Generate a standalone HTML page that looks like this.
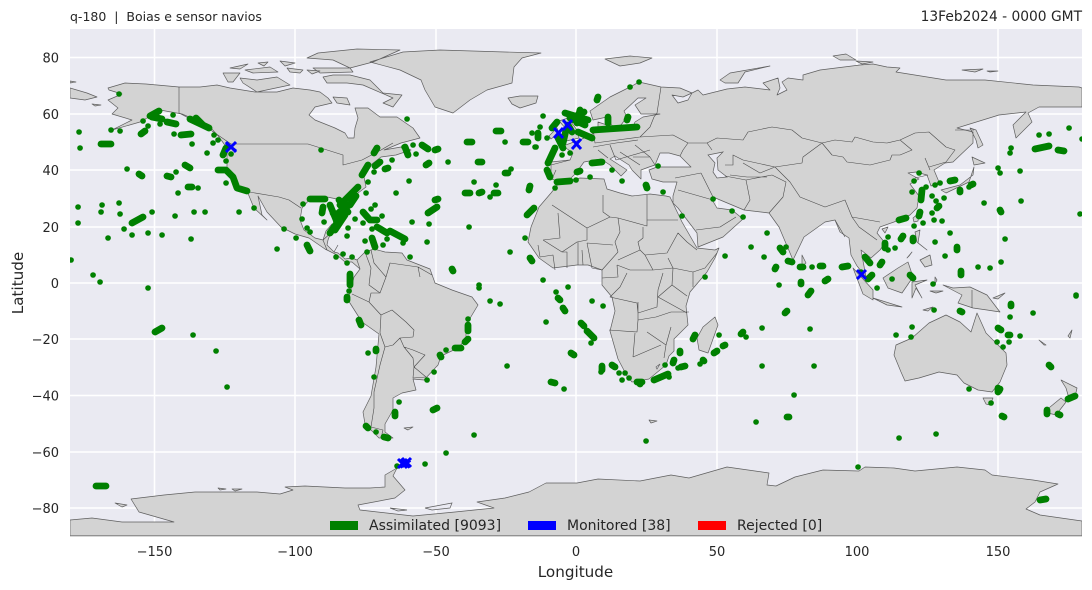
<!DOCTYPE html>
<html><head><meta charset="utf-8"><style>
html,body{margin:0;padding:0;background:#fff}
svg{display:block}
text{font-family:"DejaVu Sans","Liberation Sans",sans-serif;fill:#262626}
</style></head><body>
<svg width="1092" height="590" viewBox="0 0 1092 590" xmlns="http://www.w3.org/2000/svg">
<defs><clipPath id="c"><rect x="70" y="29" width="1012" height="507"/></clipPath></defs>
<rect x="70" y="29" width="1012" height="507" fill="#eaeaf2"/>
<path d="M154.500 29V536M295 29V536M436 29V536M576 29V536M717 29V536M857 29V536M998 29V536M70 57.500H1082M70 114H1082M70 170H1082M70 227H1082M70 283H1082M70 339H1082M70 395.500H1082M70 452H1082M70 508H1082" stroke="#fff" stroke-width="1.500" fill="none"/>
<g clip-path="url(#c)">
<path fill="#d3d3d3" stroke="#5e5e5e" stroke-width=".7" stroke-linejoin="round" d="
M108 88L125 83 146 84 179 87 200 87 217 85 230 88 255 92 277 92 293 88 310 90 320 92 328 98 332 103 315 107 309 115 315 120 335 128 345 133 348 138 354 138 355 128 358 118 355 108 368 108 380 117 397 117 413 128 420 138 401 143 384 150 401 147 411 150 396 155 381 157 368 167 364 177 366 187 354 196 350 206 349 213 345 205 342 200 327 197 310 199 302 208 300 220 304 230 315 238 323 240 326 231 332 224 331 232 328 240 327 245 334 252 338 253 345 259 352 258 357 260 360 269 352 262 345 262 337 255 325 249 309 238 295 234 281 227 267 212 258 196 262 215 267 220 254 208 247 191 239 187 227 170 227 148 219 137 211 128 196 120 182 114 160 110 154 114 140 122 112 130 132 120 112 114 118 108 108 100 122 94 109 90Z
M365 252L374 249 385 252 402 253 407 260 430 269 435 283 452 290 472 297 478 305 466 325 466 339 458 348 441 356 438 365 424 380 413 379 416 390 402 393 393 398 393 410 385 424 385 432 393 438 379 438 365 424 363 412 371 396 376 367 379 334 362 322 348 300 351 289 354 277 360 269 357 260Z
M559 183L580 178 604 179 607 189 620 193 632 196 650 194 666 196 670 197 682 222 697 248 715 250 719 248 715 258 707 272 690 292 686 306 688 325 674 339 674 351 669 356 666 365 649 379 632 382 627 376 618 359 610 331 615 311 612 297 602 285 602 270 588 265 577 265 553 268 539 258 528 242 531 227 539 207 551 193Z
M551 179L551 162 570 160 573 153 563 146 582 139 598 131 598 122 607 125 604 131 615 131 632 129 635 122 643 117 660 114 641 114 635 105 646 98 638 98 624 111 627 117 621 125 613 127 607 117 593 120 590 111 610 97 632 86 639 82 661 87 680 88 692 93 683 97 672 95 678 103 688 100 692 93 698 90 703 95 727 89 745 87 770 90 763 83 778 78 780 88 777 95 787 90 782 82 788 78 803 80 803 75 820 70 860 65 873 64 887 67 900 68 896 72 946 80 985 80 1033 85 1079 87 1082 88V107H1039L1028 113 1032 122 1016 138 1013 125 1026 112 999 115 957 128 973 132 973 143 953 162 945 163 934 170 939 182 931 186 927 175 916 172 908 173 919 179 910 184 919 196 917 208 910 215 894 222 880 227 877 233 885 243 880 250 871 258 861 250 866 277 857 266 851 255 849 238 840 232 835 220 825 222 804 237 793 260 779 227 769 213 744 210 713 197 711 198 717 208 732 210 743 219 723 237 698 247 697 233 678 208 673 203 673 196 677 182 663 182 652 179 649 170 657 167 674 167 691 167 680 156 669 153 660 153 655 165 649 167 641 170 641 179 632 170 629 165 615 156 610 159 627 170 621 176 610 165 601 159 584 162 576 173 570 179 562 182Z
M403 52L440 50 505 52 541 53 522 58 514 67 512 83 487 90 470 100 453 113 435 107 425 90 421 80 400 70 370 62Z
M508 98L520 96 538 96 536 103 520 108 512 104Z
M562 142L579 138 577 130 568 118 559 121 568 131 562 136Z
M549 136L557 128 559 133 551 139Z
M323 77L333 75 350 75 370 80 383 93 402 95 393 107 383 103 393 98 363 85 347 83 327 83Z
M333 97L347 98 350 105 337 103Z
M240 78L257 80 277 77 290 85 257 92 243 83Z
M223 73L240 73 233 82 228 82Z
M230 68L248 64 240 69Z M245 70L270 67 278 72 253 73Z M287 68L303 70 300 73 290 72Z M307 70L320 71 312 74Z
M318 53L357 49 400 50 373 62 350 68 333 60 307 58Z
M313 68L350 68 353 72 320 73Z
M258 63L268 62 264 66Z M280 61L295 63 285 66Z
M605 59L630 56 652 58 640 63 620 66Z
M720 80L730 73 770 66 745 72 738 83 725 83Z
M833 56L846 54 856 60 840 60Z M856 61L873 62 862 64Z M962 70L983 69 975 72Z M987 71L998 71 990 72Z
M970 128L976 130 983 145 978 148 976 140Z
M941 190L960 185 973 175 974 167 969 182 946 193Z M972 157L985 163 974 165Z
M853 268L873 290 873 300 863 294Z
M873 298L902 307 887 305Z
M883 278L898 268 908 262 913 277 902 293 888 288Z
M912 282L927 280 915 285 922 298 916 288 912 298Z
M943 285L953 288 970 287 987 295 1000 312 987 310 973 308 958 303 962 295Z
M915 232L920 230 918 243 927 250 917 242Z M920 260L930 255 932 265 925 267Z
M907 258L912 252 909 256Z M923 310L933 307 928 311Z M935 277L937 280 935 284Z M930 291L943 291 936 293Z M993 298L1005 293 998 299Z
M913 218L919 213 918 221 914 222Z M882 229L888 227 885 233Z
M802 255L806 263 802 266Z
M715 317L718 325 708 353 699 350 697 338 703 327Z
M896 345L912 338 929 323 946 315 960 322 971 332 977 313 986 333 1006 353 1007 365 1000 382 992 392 978 390 964 383 957 375 939 372 919 378 905 381 901 372 894 355Z
M983 398L993 398 990 405 986 404Z
M1044 412L1061 398 1066 402 1056 415Z M1061 380L1077 388 1075 397 1068 395 1066 388Z
M1039 340L1046 345 1044 345Z
M70 520L92 518 122 522 174 522 139 512 131 499 164 495 195 492 257 492 280 494 293 490 285 487 305 486 345 488 370 488 385 487 385 475 397 468 393 476 405 490 395 498 358 505 360 510 413 516 455 512 494 508 477 502 505 498 529 492 546 483 577 483 598 479 640 481 671 475 689 478 727 467 769 473 767 485 776 486 795 477 823 470 859 471 865 467 894 468 915 471 957 467 985 470 992 475 1033 480 1058 484 1040 492 1035 502 1026 509 1040 515 1082 521V536H70Z
M115 503L127 505 122 507Z M218 488L226 489 220 490Z M232 489L242 489 235 491Z
M404 428L413 427 408 430Z
M70 88L87 93 97 97 85 100 70 98Z M70 81L76 82 70 83Z M92 104L101 105 95 106Z
M1068 336L1072 330 1070 338Z M649 420L657 421 651 423Z"/>
<path fill="#eaeaf2" stroke="#5e5e5e" stroke-width=".7" d="M708 155L723 152 717 158 718 170 727 177 717 178 713 172 715 163Z M390 508L407 510 398 511Z M425 508L452 503 450 508 432 510Z M656 367L660 364 657 369Z"/>
<path fill="none" stroke="#4a4a4a" stroke-width=".6" stroke-linejoin="round" d="
M179 87V113L196 122 212 131 231 144H308L343 155V165L362 160 381 150 393 143
M249 192L279 197 289 200 301 208
M323 240L332 232 M323 240L327 250 M334 252L338 245
M380 333L385 347 380 365 374 392 374 408 371 427 383 430 381 438
M380 333L381 315 392 310 406 322 414 330 413 337 400 338 393 345 385 347
M400 338L404 347 413 350 425 355 414 367 413 358 404 347
M414 367L426 377 413 378Z
M381 315L369 302 352 294 M369 302L371 293 380 293 369 285 371 268 365 252
M371 250L374 263 386 277 390 263 418 267 432 275 M386 277L380 293 M418 267L420 277
M552 205L587 228 610 217 603 212V195 M610 217L618 218 647 226V195 M647 220H678
M558 213L560 238 543 240 M618 218L620 232 615 242 618 252
M587 228V240L577 242 562 252 543 240 M587 243L613 245
M643 227V238L638 242 640 250 618 260 M640 250L645 255 667 253 678 233 687 242 697 250
M645 255L653 270 673 268 668 258 M673 268L693 272 705 268 717 253
M617 265L630 270 653 270 M587 243L592 268 602 270 618 252 M602 278L618 277 617 265
M627 273L620 287 610 297 637 303 638 313 657 307 658 290 663 273
M673 268L672 285 687 296 M693 287L693 272 M658 297L672 285 M658 297L687 313
M538 245L540 257 553 255 555 270 M562 252H567V268 M578 242V265 M582 250L583 265
M638 302V320L656 317 671 312 689 312 M638 320L637 332 609 330 M635 333L633 357 M647 332L666 345 664 358 M633 357L661 345 M671 327L666 345
M661 87L657 113 654 117 650 127 640 137 673 135 688 143 683 150 680 156
M593 128L595 143 640 137
M688 143L707 143 717 138 743 140 748 132 772 127 792 130 802 138 822 143
M707 143L712 150 M822 143L803 157 802 163 775 167 743 160 733 155V165H725
M730 175L747 177 767 177 M743 163L760 173 775 167
M822 143L835 140 852 142 855 137 873 142 887 143 900 140 915 133 929 132 946 147 955 150 946 162 929 167
M955 130L974 130 M822 143L832 155 843 157 847 162 870 165 890 160 892 155 900 155 912 150 900 140
M775 167L790 182 800 197 825 207 845 200 852 217 880 222
M772 175L786 182 783 197 769 213 M746 180L750 200 744 210 M701 173L713 197 M675 178L701 173 M725 176L746 180 772 175
M678 190L713 200 M696 230L720 227 736 217 M835 220L845 237 M859 227L877 240 M852 217L859 227
M593 147L616 143 M616 143L638 140 M633 157L650 157 M616 160L650 150 M598 150L608 158 M610 145L616 160 M551 165L570 160 M556 170L552 179 M620 152L640 165 M635 145L650 157 M650 157L655 165
M915 178L928 175 M925 158L930 170 M972 290V308"/>
<path fill="none" stroke="#008000" stroke-width="5.600" stroke-linecap="round" d="
M119 94h.1M79 132h.1M80 148h.1M111 130h.1M120 131h.1M143 121h.1M148 126h.1M160 124h.1M173 115h.1M174 134h.1M192 144h.1M213 143h.1M214 135h.1M218 140h.1M207 153h.1M231 154h.1M226 161h.1M226 183h.1M254 208h.1M239 212h.1M127 169h.1M176 172h.1M198 188h.1M178 193h.1M119 203h.1M102 205h.1M101 212h.1M78 207h.1M78 223h.1M120 214h.1M152 212h.1M124 229h.1M132 235h.1M148 233h.1M108 238h.1M162 235h.1M191 239h.1M175 216h.1M194 212h.1M205 212h.1M71 260h.1M93 275h.1M100 282h.1M148 288h.1
M321 150h.1M413 145h.1M416 154h.1M392 160h.1M374 172h.1M368 182h.1M366 193h.1M303 204h.1M302 219h.1M307 228h.1M310 232h.1M324 222h.1M347 236h.1M348 228h.1M355 219h.1M375 205h.1M371 209h.1M382 216h.1M363 223h.1M372 229h.1M403 243h.1M387 239h.1M365 241h.1M383 245h.1M367 252h.1M343 254h.1M352 257h.1M336 257h.1M347 263h.1M410 257h.1M427 242h.1M412 222h.1M429 224h.1M409 181h.1M396 193h.1M448 162h.1M277 249h.1M284 229h.1M296 238h.1M349 291h.1M479 288h.1M404 147h.1M407 119h.1
M543 116h.1M505 142h.1M536 147h.1M540 127h.1M532 133h.1M547 138h.1M535 147h.1M511 169h.1M474 182h.1M496 185h.1M490 197h.1M469 227h.1M525 238h.1M510 252h.1M543 280h.1M479 285h.1
M630 87h.1M639 82h.1M570 153h.1M562 155h.1M612 170h.1M576 180h.1M590 177h.1M555 188h.1M622 181h.1M658 166h.1M663 192h.1M713 199h.1M732 211h.1M743 217h.1M682 216h.1
M767 233h.1M751 247h.1M725 256h.1M764 257h.1M786 247h.1M812 267h.1M888 237h.1M888 250h.1M895 248h.1M935 242h.1M950 233h.1M945 256h.1M978 267h.1M990 268h.1M1001 262h.1M1005 239h.1M892 279h.1M933 284h.1M877 288h.1M861 272h.1M779 285h.1M705 277h.1M568 287h.1M556 292h.1M1076 295h.1
M919 173h.1M914 181h.1M912 192h.1M926 187h.1M935 185h.1M940 183h.1M969 187h.1M932 196h.1M944 198h.1M936 201h.1M932 213h.1M934 220h.1M942 221h.1M923 223h.1M914 226h.1M984 203h.1M1021 201h.1M1080 214h.1M998 168h.1M1000 173h.1M1020 171h.1M1011 148h.1M1010 153h.1M1039 135h.1M1049 134h.1M1069 128h.1M1082 139h.1
M592 301h.1M603 306h.1M591 343h.1M564 389h.1M601 372h.1M619 373h.1M625 373h.1M622 380h.1M629 378h.1M669 377h.1M665 365h.1M678 368h.1M700 364h.1M719 335h.1M746 337h.1M762 328h.1M810 329h.1M762 366h.1M814 366h.1M794 395h.1M756 422h.1M646 441h.1M858 467h.1M899 438h.1M936 434h.1M896 335h.1M911 337h.1M912 327h.1M934 310h.1M1033 313h.1M1010 317h.1M1020 336h.1M1009 342h.1M997 342h.1M1003 347h.1M969 389h.1M991 403h.1M1076 296h.1
M193 335h.1M216 351h.1M227 387h.1M368 353h.1M374 377h.1M399 402h.1M376 432h.1M427 380h.1M434 372h.1M446 350h.1M468 319h.1M490 301h.1M500 304h.1M507 366h.1M474 435h.1M446 453h.1M425 464h.1M397 466h.1M546 322h.1"/>
<path fill="none" stroke="#008000" stroke-width="6.800" stroke-linecap="round" stroke-linejoin="round" d="
M101 144H111M141 134L145 131M150 116L159 111M152 117L162 119M167 122L176 124M181 135L191 134M190 119L209 128M196 118L203 125M223 155L226 148M218 170L226 170 233 177 237 188 247 191M185 165L190 168M139 174L142 176M167 176L171 177M188 187L192 187M132 223L143 217
M377 148L374 153M405 147L408 155M422 145L428 149M438 149L435 150M380 162L375 166M368 165L362 175M388 168L385 169M358 187L345 200 342 208 350 205 356 196M340 205L348 212M310 199H325M323 207L322 213M339 200L344 206M342 210L335 216 337 223 330 233M333 213L340 222M330 205L337 222M345 215L335 230M363 212L370 220M377 220L370 220M377 227L387 233M390 231L405 239M372 238L375 247M428 213L437 207M438 199L435 200M429 163L426 165M307 245L310 251M350 274L350 285M452 269L453 271
M467 142L472 142M496 131L501 131M523 142L528 142M478 162L482 162M538 133L538 138M505 173L508 173M465 193L470 193M479 193L482 192M498 193L494 193M529 190L530 186M534 208L527 215M530 258L532 261
M597 100L598 97M565 113L588 120M580 110L577 123M584 112L572 118M570 118L585 125M557 122L552 128M568 125L572 132M578 132L592 138M593 130L637 127M608 117V123M627 120L628 117M555 148L548 163M563 143L566 130M558 138L563 148M550 177L547 170M592 163L602 162M580 171L577 172M557 182L570 181M647 188L646 185
M780 248L783 252M788 261L792 262M800 267L803 267M823 266L820 266M842 267L848 266M865 257L870 263M880 265L882 262M885 243V248M901 239L903 236M913 238V241M957 250L957 247M961 271V275M910 275L913 278M872 275L868 279M825 281L828 279M801 282V284M811 291L808 295M776 267L775 269
M922 190L921 200M950 181L955 180M960 190V192M973 184L971 185M939 206L937 208M920 212L919 216M906 218L899 220M1000 210L1001 212M1035 149L1049 146M1058 150L1064 151
M558 298L560 300M563 308L565 311M581 323L584 326M587 331L594 338M571 353L574 355M551 382L555 383M602 366V370M612 365L615 367M637 382L642 382M640 384h.1M654 380L668 374M685 366L681 367M674 360L673 363M680 351V353M695 335L693 339M703 360L704 361M717 351L714 353M725 345L723 346M743 332L741 334M787 311L785 313M787 417L789 417M960 311L962 312M1011 304V306M998 328L1001 330M1008 335L1010 335M1049 365L1051 367M998 388V392M999 391L1000 389M1002 416L1004 417M1047 410V414M1058 414L1060 415M1068 399L1075 396M1040 500L1046 499
M155 332L162 328M96 486H106M347 297V300M359 320L361 325M376 349V351M395 412V416M366 426L368 428M384 437L388 438M440 355L441 357M455 348L461 348M465 342L468 339M468 325V331M433 410L437 408"/>
<path fill="none" stroke="#0000ff" stroke-width="3" d="M226 142L236 152M236 142L226 152M226 143L236 151M554 128L563 138M563 128L554 138M563 120L572 130M572 120L563 130M572 139L581 149M581 139L572 149M857 270L866 279M866 270L857 279M398 459L407 468M407 459L398 468M402 458L411 467M411 458L402 467"/>
<path stroke="#0000ff" stroke-width="4" d="M400 460L410 467M410 460L400 467"/>
</g>
<rect x="70" y="535.300" width="1012" height="1" fill="#777"/>
<rect x="330" y="521" width="28" height="9" fill="#008000"/>
<rect x="528" y="521" width="28" height="9" fill="#0000ff"/>
<rect x="698" y="521" width="28" height="9" fill="#ff0000"/>
<g font-size="13">
<g text-anchor="end">
<text x="59" y="62.500">80</text><text x="59" y="119">60</text><text x="59" y="175">40</text><text x="59" y="232">20</text><text x="59" y="288">0</text><text x="59" y="344">−20</text><text x="59" y="400.500">−40</text><text x="59" y="457">−60</text><text x="59" y="513">−80</text>
</g>
<g text-anchor="middle">
<text x="154.500" y="556">−150</text><text x="295" y="556">−100</text><text x="436" y="556">−50</text><text x="576" y="556">0</text><text x="717" y="556">50</text><text x="857" y="556">100</text><text x="998" y="556">150</text>
</g>
</g>
<g font-size="14">
<text x="369" y="530">Assimilated [9093]</text>
<text x="567" y="530">Monitored [38]</text>
<text x="737" y="530">Rejected [0]</text>
</g>
<text x="1082" y="21" font-size="13.800" text-anchor="end">13Feb2024 - 0000 GMT</text>
<text x="70" y="21" font-size="12.500" xml:space="preserve">q-180  |  Boias e sensor navios</text>
<text x="575.500" y="577" font-size="15.200" text-anchor="middle">Longitude</text>
<text transform="translate(23 283) rotate(-90)" font-size="15.200" text-anchor="middle">Latitude</text>
</svg>
</body></html>
